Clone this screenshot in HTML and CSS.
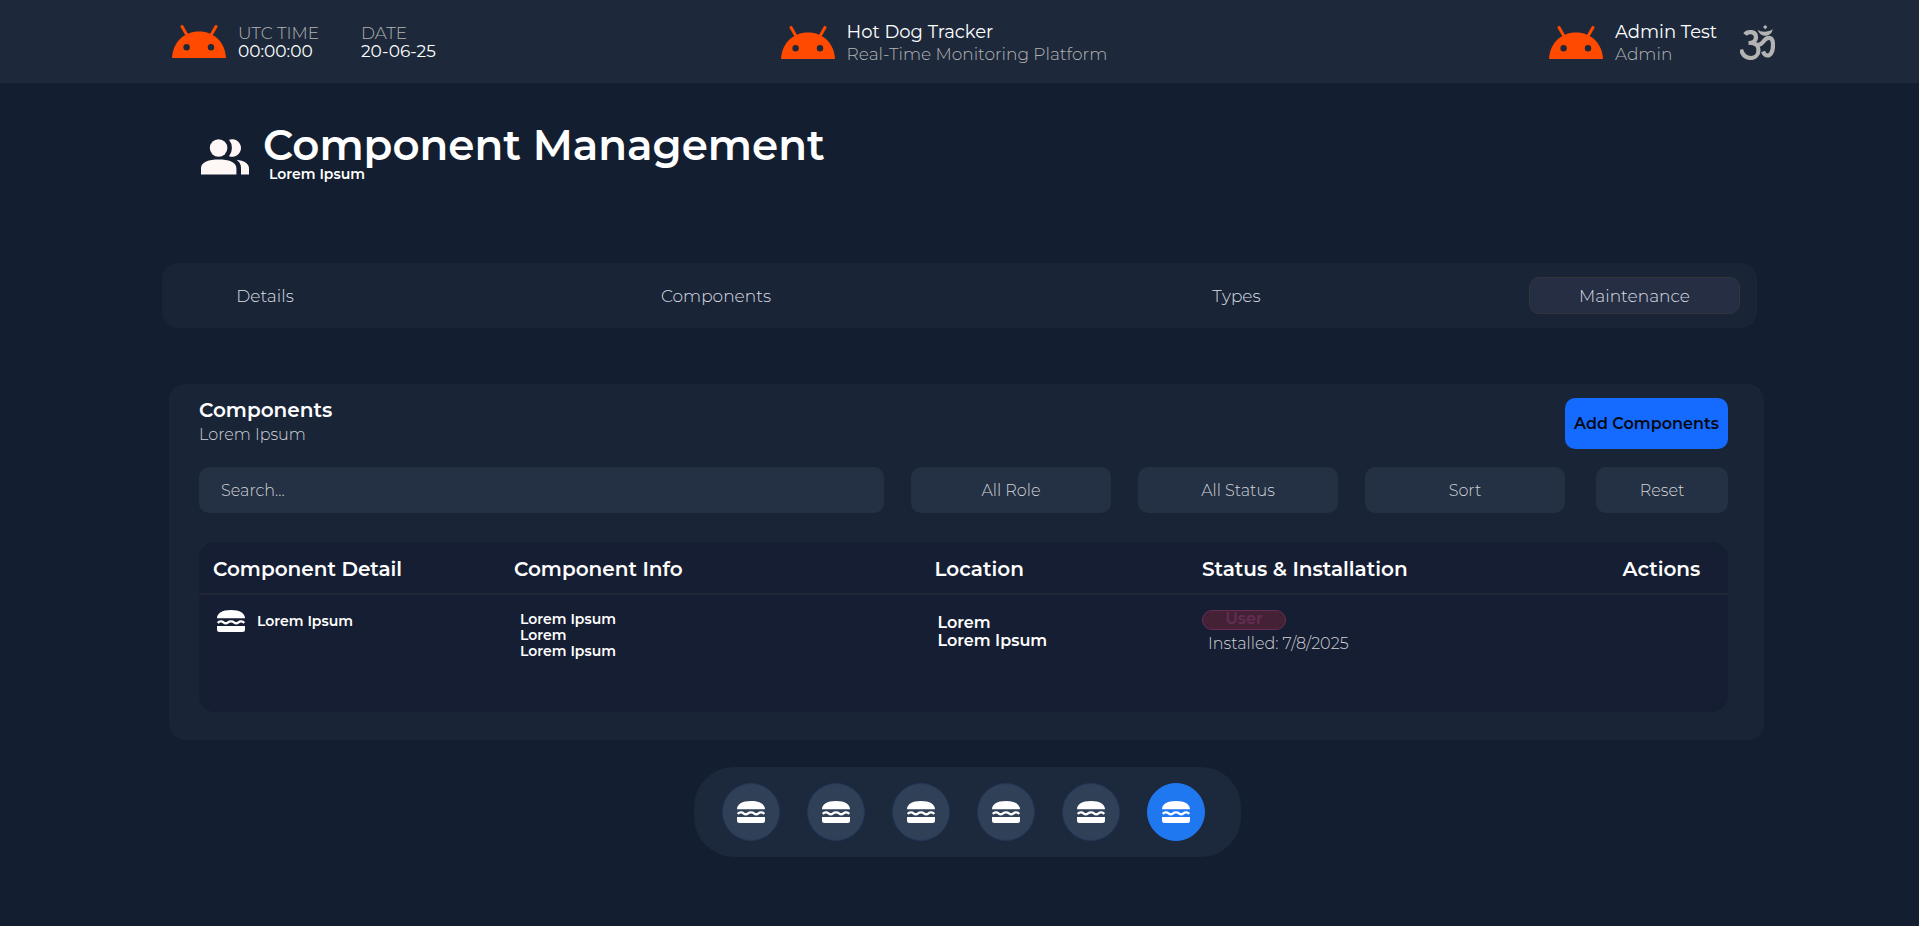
FILE: index.html
```html
<!DOCTYPE html>
<html lang="en">
<head>
<meta charset="utf-8">
<meta name="viewport" content="width=device-width, initial-scale=1">
<title>Hot Dog Tracker</title>
<link rel="stylesheet" href="styles.css">
</head>
<body>
<svg class="defs" aria-hidden="true">
  <symbol id="bot" viewBox="0 0 54 33">
    <path d="M0 33C1 17 12 6.500 27 6.500S53 17 54 33Z" fill="#ff4a00"/>
    <path d="M10 1.500 15.500 11M44 1.500 38.500 11" stroke="#ff4a00" stroke-width="3" stroke-linecap="round"/>
    <circle cx="14.600" cy="22.300" r="3.200" fill="#1d293b"/><circle cx="39" cy="22.300" r="3.200" fill="#1d293b"/>
  </symbol>
  <symbol id="burger" viewBox="0 0 28 22">
    <path d="M0 8.300C0 3.500 5 0 14 0S28 3.500 28 8.300ZM0 16h28v3.500a2.500 2.500 0 0 1-2.500 2.500h-23A2.500 2.500 0 0 1 0 19.500Z" fill="#fff"/>
    <path d="M.8 13C2.500 11 5 11 6.500 12.300S9.500 13.600 11 12.300S15.500 11 17 12.300S20 13.600 21.500 12.300S25.500 11 27.200 13" fill="none" stroke="#fff" stroke-width="2.400"/>
  </symbol>
</svg>

<header class="topbar">
  <div class="topbar-group">
    <svg class="bot"><use href="#bot"/></svg>
    <div class="clock"><span class="muted">UTC TIME</span><span>00:00:00</span></div>
    <div class="clock"><span class="muted">DATE</span><span>20-06-25</span></div>
  </div>
  <div class="topbar-group brand">
    <svg class="bot"><use href="#bot"/></svg>
    <div class="label"><span class="name">Hot Dog Tracker</span><span class="muted">Real-Time Monitoring Platform</span></div>
  </div>
  <div class="topbar-group account">
    <svg class="bot"><use href="#bot"/></svg>
    <div class="label account-label"><span class="name">Admin Test</span><span class="muted">Admin</span></div>
    <svg class="om" viewBox="0 0 35 35" role="img" aria-label="Om">
      <g fill="none" stroke="#b3b3b3" stroke-width="4.200">
        <path d="M5 9.500C8 5.500 16 6.500 16 12C16 16.500 12 18 8.500 18"/>
        <path d="M11 18C15.500 18 18.500 21 18.500 25C18.500 30 15 33 11 33C6 33 2.500 30 1 24.500"/>
        <path d="M14 18.500C18 21 21 19.500 23 17C25 14 27 12.800 29 12.800C32 12.800 33 16 33 20C33 26 31 30.500 27.500 30.500C25.500 30.500 24 29 23 26.500"/>
      </g>
      <path d="M17.700 4.500C20 7.500 29 7.500 32.800 4C32 8.500 29 10.800 25.300 10.800S18.500 8 17.700 4.500ZM25.200 0l2.200 2-2.200 2.200L23 2Z" fill="#b3b3b3"/>
    </svg>
  </div>
</header>

<main class="page">
  <section class="heading">
    <svg class="people" viewBox="0 0 48 36" aria-hidden="true">
      <g fill="#fff6f6">
        <circle cx="17.600" cy="9" r="8.800"/>
        <path d="M28 .8A8.800 8.800 0 1 1 28 17.200A13 13 0 0 0 28 .8ZM0 35.500V29C0 23 8 20.500 17.700 20.500S35.400 23 35.400 29V35.500ZM35.500 20.700C43 21.500 48 24.500 48 29V35.500H40V29C40 25.500 38.500 22.800 35.500 20.700Z"/>
      </g>
    </svg>
    <div>
      <h1>Component Management</h1>
      <p>Lorem Ipsum</p>
    </div>
  </section>

  <nav class="tabs">
    <button type="button">Details</button>
    <button type="button">Components</button>
    <button type="button">Types</button>
    <button type="button" class="current" aria-current="page">Maintenance</button>
  </nav>

  <section class="panel">
    <div class="panel-head">
      <div>
        <h2>Components</h2>
        <p>Lorem Ipsum</p>
      </div>
      <button type="button" class="add">Add Components</button>
    </div>

    <form class="filters">
      <input type="text" placeholder="Search..." aria-label="Search">
      <select aria-label="Role"><option>All Role</option></select>
      <select aria-label="Status"><option>All Status</option></select>
      <select aria-label="Sort"><option>Sort</option></select>
      <button type="reset">Reset</button>
    </form>

    <div class="table-box">
      <table>
        <thead>
          <tr>
            <th class="col-detail">Component Detail</th>
            <th class="col-info">Component Info</th>
            <th class="col-location">Location</th>
            <th class="col-status">Status &amp; Installation</th>
            <th class="col-actions">Actions</th>
          </tr>
        </thead>
        <tbody>
          <tr>
            <td><div class="detail"><svg class="burger"><use href="#burger"/></svg>Lorem Ipsum</div></td>
            <td><div class="info">Lorem Ipsum<br>Lorem<br>Lorem Ipsum</div></td>
            <td><div class="location">Lorem<br>Lorem Ipsum</div></td>
            <td><span class="pill">User</span><div class="installed">Installed: 7/8/2025</div></td>
            <td></td>
          </tr>
        </tbody>
      </table>
    </div>
  </section>

  <nav class="dock" aria-label="Sections">
    <button type="button" aria-label="Section 1"><svg class="burger"><use href="#burger"/></svg></button>
    <button type="button" aria-label="Section 2"><svg class="burger"><use href="#burger"/></svg></button>
    <button type="button" aria-label="Section 3"><svg class="burger"><use href="#burger"/></svg></button>
    <button type="button" aria-label="Section 4"><svg class="burger"><use href="#burger"/></svg></button>
    <button type="button" aria-label="Section 5"><svg class="burger"><use href="#burger"/></svg></button>
    <button type="button" class="active" aria-label="Section 6"><svg class="burger"><use href="#burger"/></svg></button>
  </nav>
</main>
</body>
</html>
```
FILE: styles.css
```css
* { box-sizing: border-box; }

body {
  margin: 0;
  background: #131e31;
  color: #fff;
  font-family: Montserrat, Inter, "Open Sans", sans-serif;
  font-size: 16px;
}

h1, h2, p { margin: 0; }

button, input, select {
  font: inherit;
  color: inherit;
  border: 0;
  padding: 0;
  margin: 0;
}

button { cursor: pointer; }

.defs { position: absolute; width: 0; height: 0; }
.bot { width: 54px; height: 33px; flex: none; }
.burger { width: 28px; height: 22px; flex: none; display: block; }
.muted { color: #b3b3b3; font-weight: 300; }

/* Top bar */
.topbar {
  display: grid;
  grid-template-columns: 1fr auto 1fr;
  align-items: center;
  min-height: 83px;
  padding: 0 144px 0 172px;
  background: #1d293b;
}

.topbar-group { display: flex; align-items: center; gap: 12px; }

.clock {
  display: flex;
  flex-direction: column;
  min-width: 84px;
  margin-right: 27px;
  font-size: 17px;
  line-height: 18px;
}

.brand { min-width: 386px; padding-top: 2px; }
.label { display: flex; flex-direction: column; line-height: 22px; }
.name { font-size: 18px; }
.label .muted { font-size: 17px; }
.account { justify-content: flex-end; padding-top: 2px; }
.account-label { min-width: 113px; }
.om { width: 35px; height: 35px; flex: none; }

/* Page */
.page { display: flex; flex-direction: column; padding: 41px 155px 0 162px; }

.heading { display: flex; gap: 14px; align-items: center; padding-left: 39px; }
.people { width: 48px; height: 36px; margin-top: 8px; }
.heading h1 { font-size: 42px; line-height: 42px; font-weight: 600; }
.heading p { padding-left: 6px; font-size: 14px; line-height: 16px; font-weight: 600; }

.tabs {
  display: grid;
  grid-template-columns: 206fr 696fr 345fr 331fr;
  margin: 81px 7px 0 0;
  padding: 14px 17px 14px 0;
  border-radius: 16px;
  background: #1a2437;
}

.tabs button {
  height: 37px;
  background: none;
  color: #dadde2;
  font-size: 17px;
  font-weight: 300;
}

.tabs .current {
  justify-self: end;
  width: 211px;
  border: 1px solid #333439;
  border-radius: 10px;
  background: #252e42;
}

.panel {
  margin: 56px 0 0 7px;
  padding: 14px 36px 28px 30px;
  border-radius: 16px;
  background: #1a2437;
}

.panel-head { display: flex; justify-content: space-between; align-items: flex-start; }
.panel-head h2 { font-size: 20px; line-height: 24px; font-weight: 600; }
.panel-head p { color: #d0d3d8; line-height: 26px; font-weight: 300; }

.add {
  width: 163px;
  height: 51px;
  border-radius: 10px;
  background: #156aff;
  color: #060a14;
  font-weight: 600;
}

.filters {
  display: grid;
  grid-template-columns: 685fr 200fr 200fr 200fr 136fr;
  gap: 27px;
  margin-top: 18px;
}

.filters > * {
  min-width: 0;
  height: 46px;
  border-radius: 10px;
  background: #243043;
  color: #d0d3d8;
  font-weight: 300;
}

.filters input { padding: 0 22px; }
.filters input::placeholder { color: #d0d3d8; opacity: 1; }
.filters select { appearance: none; text-align: center; text-align-last: center; }
.filters button { margin-left: 4px; }

.table-box {
  margin-top: 29px;
  min-height: 170px;
  border-radius: 16px;
  background: #161e33;
}

table { width: 100%; border-collapse: collapse; table-layout: fixed; }

th {
  height: 52px;
  padding: 2px 0 0 14px;
  border-bottom: 2px solid #212635;
  font-size: 20px;
  font-weight: 600;
  text-align: left;
  white-space: nowrap;
}

.col-detail { width: 301px; }
.col-info { width: 27.5%; }
.col-location { width: 17.5%; }
.col-status { width: 27.5%; }

td { padding: 15px 0 0 14px; vertical-align: top; font-weight: 600; }

.detail { display: flex; align-items: center; gap: 12px; padding-left: 4px; font-size: 14px; }
.info { padding: 1px 0 0 6px; font-size: 14px; line-height: 16px; }
.location { padding: 4px 0 0 3px; line-height: 18px; }

.pill {
  display: block;
  width: 84px;
  height: 20px;
  border: 1px solid #6a2d55;
  border-radius: 10px;
  background: #452136;
  color: #632d53;
  line-height: 16px;
  text-align: center;
}

.installed { padding-left: 6px; color: #d0d3d8; line-height: 28px; font-weight: 300; }

/* Bottom dock */
.dock {
  display: flex;
  align-self: center;
  gap: 27px;
  margin: 27px 0 0 8px;
  padding: 16px 36px 16px 28px;
  border-radius: 40px;
  background: #1c283b;
}

.dock button {
  display: grid;
  place-items: center;
  width: 58px;
  height: 58px;
  border: 1px solid #23365a;
  border-radius: 50%;
  background: #304057;
}

.dock .active { border-color: #1f78f0; background: #1f78f0; }
```
